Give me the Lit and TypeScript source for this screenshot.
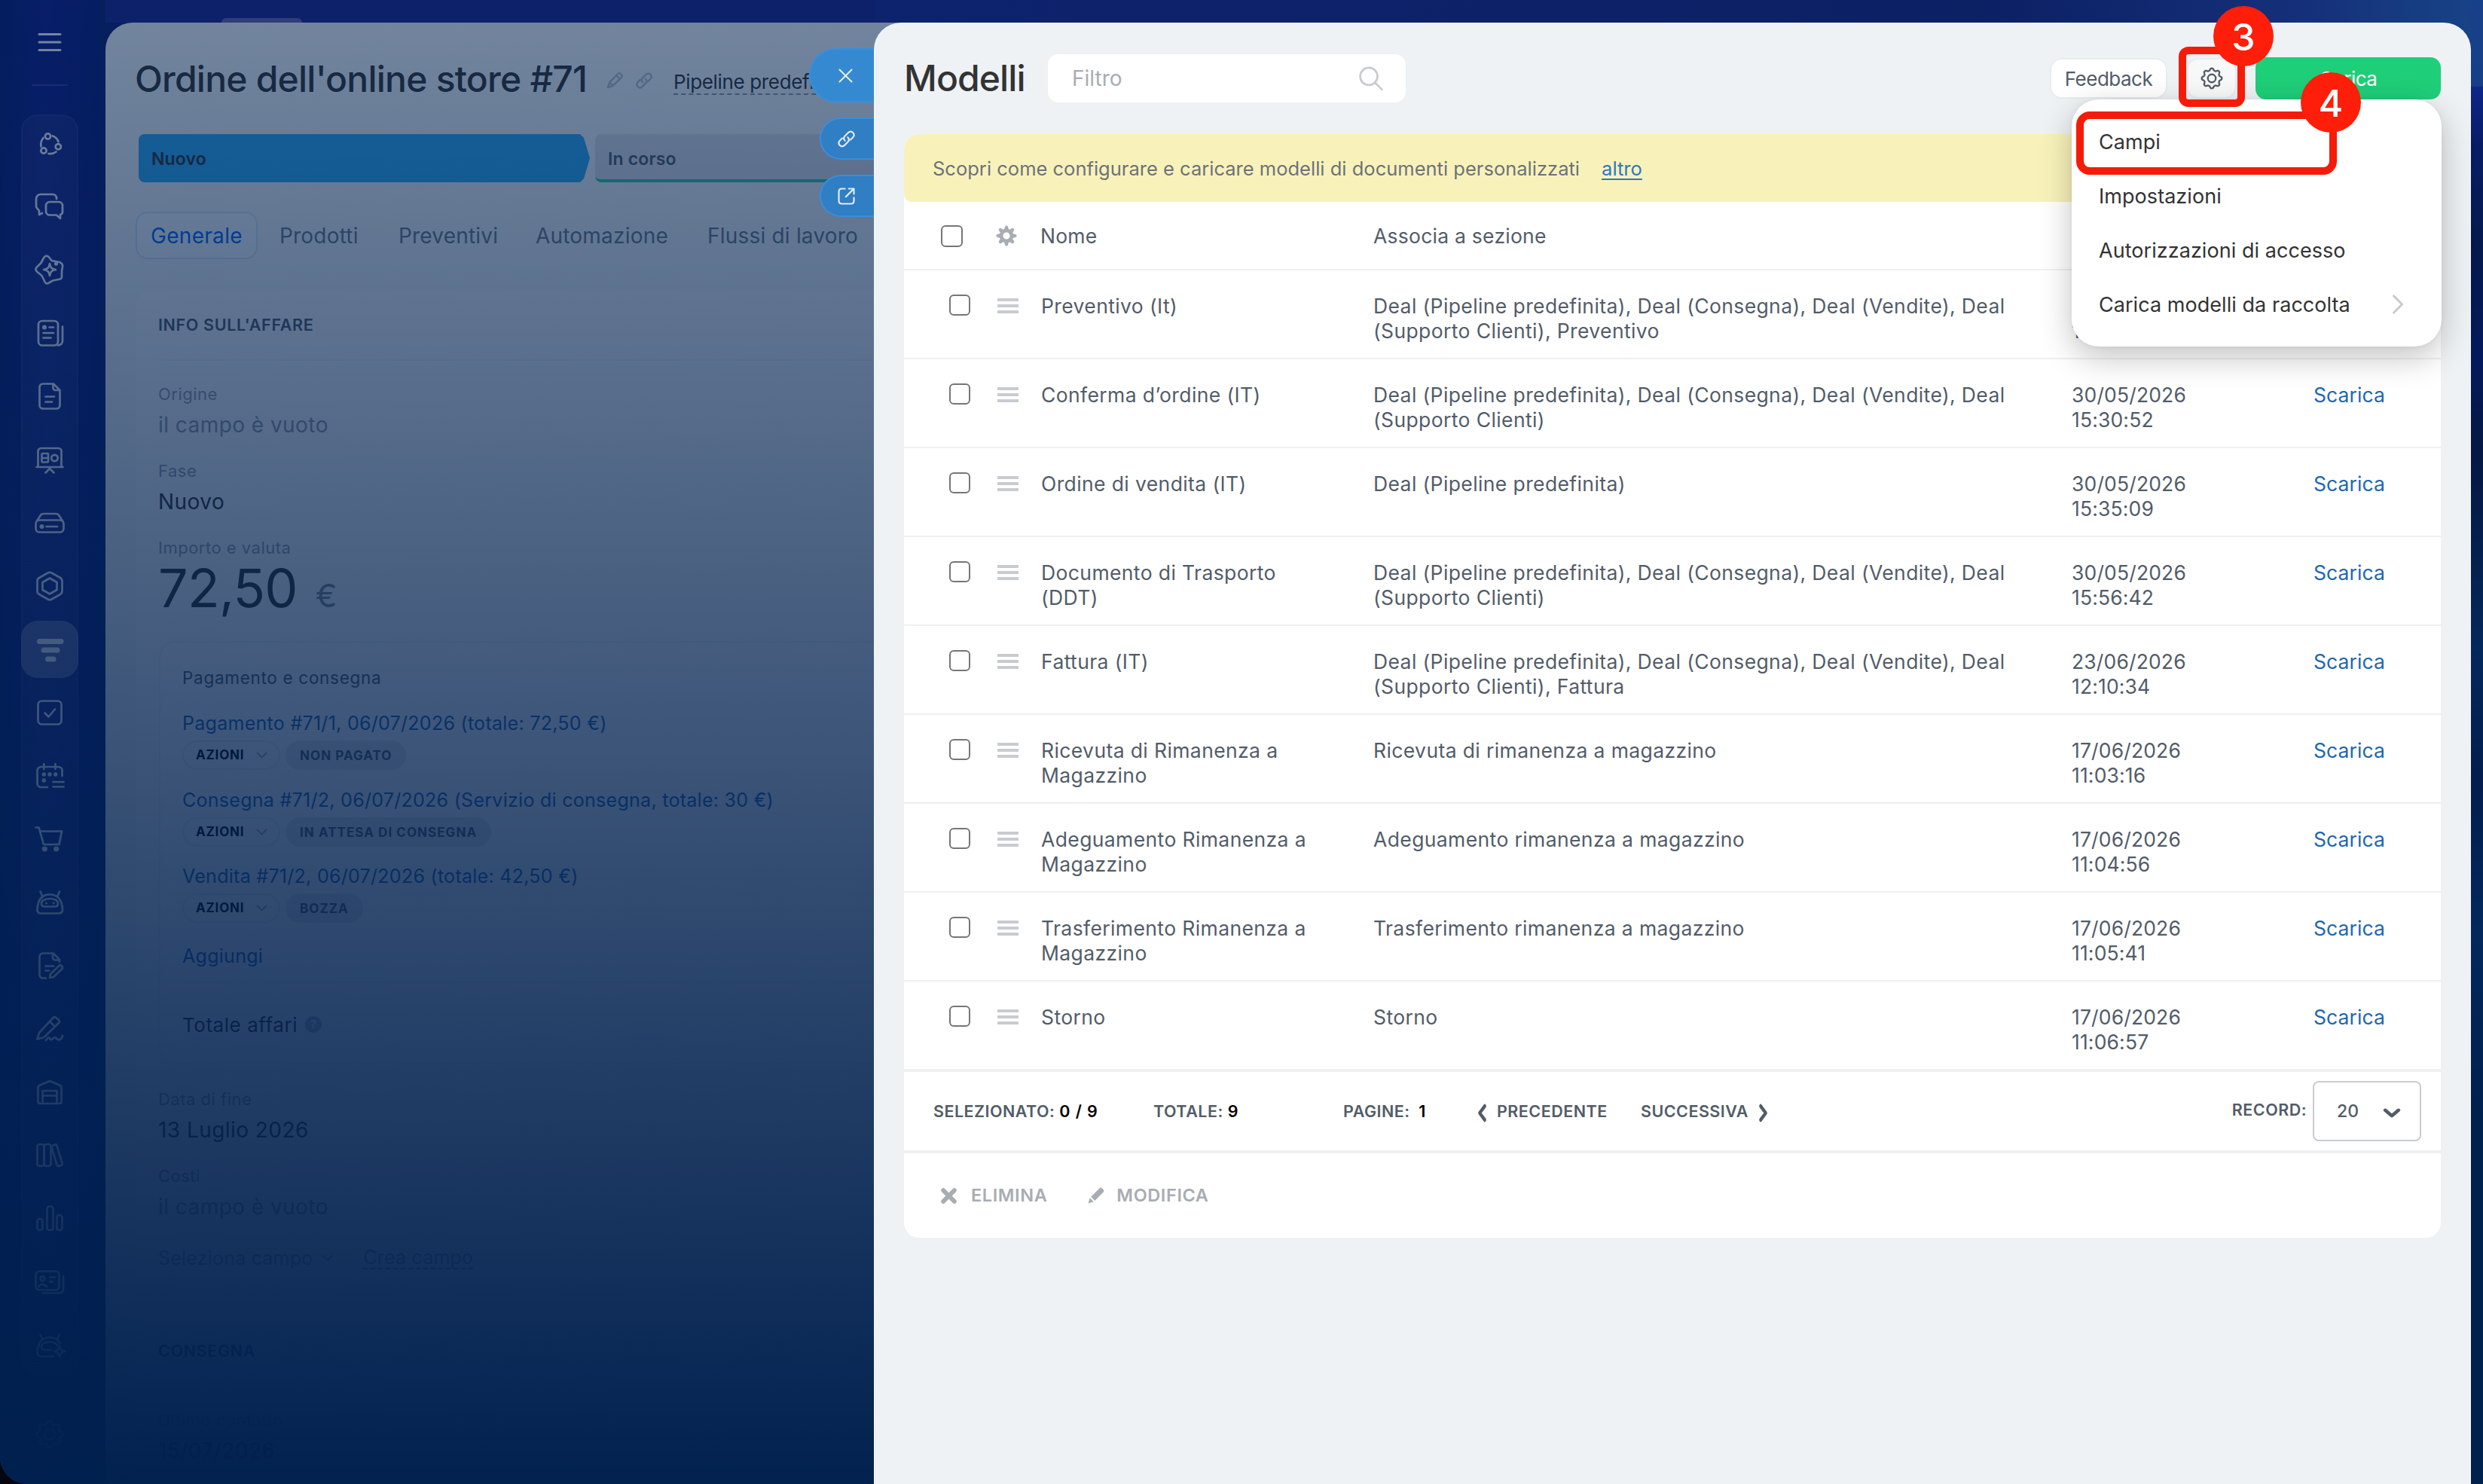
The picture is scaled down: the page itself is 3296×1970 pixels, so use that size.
import { LitElement, html, svg, css, nothing } from "lit";
import { customElement, property } from "lit/decorators.js";
import { classMap } from "lit/directives/class-map.js";

/** Closed outline of a gear with soft teeth, as a path string. */
function gearPath(cx: number, cy: number, r: number, depth: number, teeth: number): string {
  const steps = teeth * 16;
  let d = "";
  for (let i = 0; i <= steps; i++) {
    const a = (i / steps) * Math.PI * 2;
    const wave = Math.max(-0.75, Math.min(0.75, Math.cos(a * teeth))) / 0.75;
    const rr = r + depth * wave;
    d += `${i ? "L" : "M"}${(cx + rr * Math.sin(a)).toFixed(2)} ${(cy - rr * Math.cos(a)).toFixed(2)}`;
  }
  return d + "Z";
}

const ICONS: Record<string, unknown> = {
  menu: svg`<path d="M6 9.5H34M6 20H34M6 30.5H34"/>`,
  share: svg`<circle cx="17.5" cy="11" r="3.6"/><circle cx="31.3" cy="24.7" r="3.6"/><circle cx="12" cy="30" r="3.6"/>
    <path d="M24 10.5A13 13 0 0 1 31.500 18M28.500 31.500A13 13 0 0 1 18.500 34M8.500 24.500A14 14 0 0 1 11.500 13"/>`,
  chat: svg`<path d="M29 10V9a5 5 0 0 0-5-5H8a6 6 0 0 0-6 6V20c0 3 3 3 4 6v5l4-2"/>
    <path d="M20 14H32a5 5 0 0 1 5 5V27a4 4 0 0 1-3 4V36l-5-4.500H20a5 5 0 0 1-5-5V19a5 5 0 0 1 5-5z"/>`,
  star: svg`<path d="M12 4.500Q15.500-1 19.500 4L22.500 8L33 10Q37.500 11.500 37 16L36 22V30Q35.500 33 31 33L24 34.500L18 38Q14 39.500 12.500 34L9.500 28L3 22.500Q0 19.500 3 16.500L8.500 11z"/>
    <path d="M20 12c1 5.500 2.500 7 8 8c-5.500 1-7 2.500-8 8c-1-5.500-2.500-7-8-8c5.500-1 7-2.500 8-8z"/><circle class="dot" cx="28.500" cy="12" r="2.600"/>`,
  news: svg`<rect x="5" y="4" width="26" height="32.500" rx="5"/><path d="M37 11.500V30.500a6 6 0 0 1-6 6M19.500 12.500H25M11.500 20H25M11.500 26.500H21.500"/><circle class="dot" cx="13" cy="12.500" r="3"/>`,
  doc: svg`<path d="M11 3.500H25L33.500 12V32a4.500 4.500 0 0 1-4.500 4.500H11a4.500 4.500 0 0 1-4.500-4.500V8a4.500 4.500 0 0 1 4.500-4.500zM24.500 4V9a3 3 0 0 0 3 3H33M14.500 20.500H26M14.500 27.500H23"/>`,
  board: svg`<path d="M4.500 29V9a4 4 0 0 1 4-4h23a4 4 0 0 1 4 4V29M2.500 30H37.500M14.500 37.500L20 32L25.500 37.500"/><rect x="9.500" y="12" width="8.500" height="11.500" rx="1"/><path d="M10 18H18"/><circle cx="26.500" cy="18" r="4.200"/>`,
  drive: svg`<rect x="1.500" y="16.500" width="37" height="16" rx="5"/><path d="M3 17.500L7.500 10.500a5 5 0 0 1 4.500-2.500H28a5 5 0 0 1 4.500 2.500L37 17.500M15.500 25H30"/><circle class="dot" cx="9.500" cy="25" r="3"/>`,
  hex: svg`<path d="M17.500 2.500q2.500-1.500 5 0L34 9q2.500 1.500 2.500 4.500v13q0 3-2.500 4.500L22.500 37.500q-2.500 1.500-5 0L6 31q-2.500-1.500-2.500-4.500v-13q0-3 2.500-4.500z"/><path d="M20 9.500L29.500 15V25L20 30.500L10.500 25V15z"/>`,
  crm: svg`<path class="bar" d="M6.500 9.500H35M12 21H30M17.500 33H25"/>`,
  check: svg`<rect x="4.500" y="4.500" width="31" height="31" rx="5"/><path d="M13.500 20.500l5 5 8.500-10"/>`,
  calendar: svg`<path d="M17 35H8.500a5 5 0 0 1-5-5V13a5 5 0 0 1 5-5H31.500a5 5 0 0 1 5 5V20M12.300 4V11M27.500 4V11M24.500 28H38.500M24.500 34.500H38.500"/><circle class="dot" cx="12.300" cy="18" r="2.700"/><circle class="dot" cx="20" cy="18" r="2.700"/><circle class="dot" cx="27.700" cy="18" r="2.700"/><circle class="dot" cx="12.300" cy="26" r="2.700"/>`,
  cart: svg`<path d="M1.500 4.500H5.500L12 27H32.500L36 9.500H7.500"/><circle class="dot" cx="13.300" cy="33" r="3.600"/><circle class="dot" cx="28.700" cy="33" r="3.600"/>`,
  robot: svg`<path d="M3.500 29.500C4 16 10 9.500 20 9.500S36.500 16 37 29.500q0 5-5 5H8.500q-5 0-5-5zM10 11L7.500 5.500M30.500 11L33 5.500"/><path d="M9 21c0-8 22-8 22 0q0 4.500-4 4.500H13q-4 0-4-4.500z"/><circle class="dot" cx="15.500" cy="21" r="1.500"/><circle class="dot" cx="25" cy="21" r="1.500"/>`,
  docedit: svg`<path d="M15 36.500H11a4.500 4.500 0 0 1-4.500-4.500V8a4.500 4.500 0 0 1 4.500-4.500H25L33 12V15M24 4V9a3.500 3.500 0 0 0 3.500 3.500H33M14.500 20.500H25M14.500 26.500H19"/><path d="M20 36l1-5L32 20.500q2-2 4 0t0 4L25 35z"/>`,
  sign: svg`<path d="M3.500 33.500L6 25L24.500 5q2-2 4 0l3.500 3q2 2 0 4L12.500 31zM20 10l7 7M15 35q4-6 5-2.500t5-.5q3-2 4 1q6 3.500 8-4"/>`,
  store: svg`<path d="M7.500 35Q4.500 35 4.500 32V14Q4.500 11.500 7 10.500L20 5L33 10.500Q35.500 11.500 35.500 14V32Q35.500 35 32.500 35zM10.500 34.500V18H29.500V34.500M10.500 24.500H29.500"/>`,
  books: svg`<rect x="3.500" y="5" width="9" height="29" rx="3"/><rect x="12.500" y="5" width="9" height="29" rx="3"/><path d="M24 6.500L27 5.500Q29 5 29.500 6.500L36.500 30.500Q37 32.500 35 33L32 34Q30.500 34.500 29.500 32.500L22.500 9Q22 7 24 6.500z"/>`,
  chart: svg`<rect x="3.500" y="20" width="7" height="15" rx="3"/><rect x="16.500" y="3.500" width="8" height="31.500" rx="3"/><rect x="29.500" y="15" width="7" height="20" rx="3"/>`,
  cards: svg`<rect x="1.500" y="5.500" width="31" height="25" rx="5"/><path d="M38 12V29.500a5 5 0 0 1-5 5H10M20 13.500H27M20 19.500H24M5.500 26q4.500-6 10.500 0"/><circle cx="10.500" cy="15.500" r="2.800"/>`,
  robotspark: svg`<path d="M25 34.500H8.500q-5 0-5-5C4 16 10 9.500 20 9.500q10 0 13.500 8M10 11L7.500 5.500M30.500 11L33 5.500M22 26H13q-4 0-4-4.500c0-8 20-8 21-1"/><path d="M33 21q1 6 7 7q-6 1-7 7q-1-6-7-7q6-1 7-7z"/>`,
  gear: svg`<path d=${gearPath(20, 20, 15.500, 1.800, 8)}/><circle cx="20" cy="20" r="7"/>`,
  gearSmall: svg`<path d=${gearPath(20, 20, 17, 1.900, 8)}/><circle cx="20" cy="20" r="7.500"/>`,
  gearSolid: svg`<path class="solid" fill-rule="evenodd" d=${gearPath(20, 20, 16.300, 3, 8) + "M20 13.500a6.500 6.500 0 1 0 0 13a6.500 6.500 0 1 0 0-13z"}/>`,
  pencil: svg`<path d="M5 35L8.500 24L27 5q3-3 6 0l2 2q3 3 0 6L16 31.500zM24 9l7.500 7.500M8.500 24l7.500 7.500"/>`,
  link: svg`<path d="M17 23.500q-5-5 0-10L24 6.500q5-4.500 10 0q4.500 5 0 10L29 21.500M23 16.500q5 5 0 10L16 33.500q-5 4.500-10 0q-4.500-5 0-10L11 18.500"/>`,
  open: svg`<path d="M17 4H10.500Q4 4 4 10.500V29.500Q4 36 10.500 36H29.500Q36 36 36 29.500V23M25 4H36V15M35.500 4.500L19 21"/>`,
  close: svg`<path d="M6 6L34 34M34 6L6 34"/>`,
  search: svg`<circle cx="16.500" cy="17" r="13.500"/><path d="M26.500 27L37 37.500"/>`,
  right: svg`<path d="M12 4L28 20L12 36"/>`,
  left: svg`<path d="M28 4L12 20L28 36"/>`,
  down: svg`<path d="M4 12L20 28L36 12"/>`,
  cross: svg`<path d="M6 6L34 34M34 6L6 34"/>`,
  pencilSolid: svg`<path class="solid" d="M1 39L5 26L14 35zM7.500 23L28 2.500q3-3 6 0l3.500 3.500q3 3 0 6L17 32.500z"/>`,
};

const NAV = ["share", "chat", "star", "news", "doc", "board", "drive", "hex", "crm", "check", "calendar", "cart",
  "robot", "docedit", "sign", "store", "books", "chart", "cards", "robotspark"];

const ALL_DEALS = "Deal (Pipeline predefinita), Deal (Consegna), Deal (Vendite), Deal";

interface Row { name: string[]; bind: string[]; date: string; time: string; action: string; }
const ROWS: Row[] = [
  { name: ["Preventivo (It)"], bind: [ALL_DEALS, "(Supporto Clienti), Preventivo"], date: "\u00a0", time: "15:28:14", action: "" },
  { name: ["Conferma d’ordine (IT)"], bind: [ALL_DEALS, "(Supporto Clienti)"], date: "30/05/2026", time: "15:30:52", action: "Scarica" },
  { name: ["Ordine di vendita (IT)"], bind: ["Deal (Pipeline predefinita)"], date: "30/05/2026", time: "15:35:09", action: "Scarica" },
  { name: ["Documento di Trasporto", "(DDT)"], bind: [ALL_DEALS, "(Supporto Clienti)"], date: "30/05/2026", time: "15:56:42", action: "Scarica" },
  { name: ["Fattura (IT)"], bind: [ALL_DEALS, "(Supporto Clienti), Fattura"], date: "23/06/2026", time: "12:10:34", action: "Scarica" },
  { name: ["Ricevuta di Rimanenza a", "Magazzino"], bind: ["Ricevuta di rimanenza a magazzino"], date: "17/06/2026", time: "11:03:16", action: "Scarica" },
  { name: ["Adeguamento Rimanenza a", "Magazzino"], bind: ["Adeguamento rimanenza a magazzino"], date: "17/06/2026", time: "11:04:56", action: "Scarica" },
  { name: ["Trasferimento Rimanenza a", "Magazzino"], bind: ["Trasferimento rimanenza a magazzino"], date: "17/06/2026", time: "11:05:41", action: "Scarica" },
  { name: ["Storno"], bind: ["Storno"], date: "17/06/2026", time: "11:06:57", action: "Scarica" },
];

@customElement("ui-icon")
class UiIcon extends LitElement {
  @property() name = "";
  static styles = css`
    :host { display: block; width: 40px; height: 40px; flex: none; --w: 2.7; }
    svg { display: block; width: 100%; height: 100%; overflow: visible; fill: none; stroke: currentColor;
      stroke-width: var(--w); stroke-linecap: round; stroke-linejoin: round; }
    .dot, .solid { fill: currentColor; stroke: none; }
    .bar { stroke-width: 7; }
  `;
  render() {
    return html`<svg viewBox="0 0 40 40" preserveAspectRatio="none">${ICONS[this.name] ?? nothing}</svg>`;
  }
}

@customElement("nav-rail")
class NavRail extends LitElement {
  static styles = css`
    :host { display: flex; flex-direction: column; align-items: center; width: 132px; height: 1970px; color: #f1f4fb;
      background: linear-gradient(90deg, rgb(8, 26, 112), rgb(14, 28, 132) 45%, rgb(10, 26, 118)); }
    .top { margin-top: 36px; --w: 3; }
    .rule { width: 48px; height: 2px; margin: 36px 0 38px; background: rgba(255, 255, 255, 0.15); }
    .list { display: flex; flex-direction: column; gap: 8px; width: 72px; padding: 0; border-radius: 22px;
      background: rgba(255, 255, 255, 0.06); border: 2px solid rgba(255, 255, 255, 0.05); }
    .item { display: flex; align-items: center; justify-content: center; height: 76px; margin: 0 -2px; }
    .item.first { margin-top: -2px; }
    .item.on { border-radius: 22px; background: rgba(255, 255, 255, 0.3); }
    .gear { margin-top: 58px; opacity: 0.7; }
  `;
  render() {
    return html`
      <ui-icon class="top" name="menu"></ui-icon>
      <div class="rule"></div>
      <div class="list">
        ${NAV.map((n, i) => html`<div class=${classMap({ item: true, first: i === 0, on: n === "crm" })}><ui-icon name=${n}></ui-icon></div>`)}
      </div>
      <ui-icon class="gear" name="gear"></ui-icon>
    `;
  }
}

@customElement("order-panel")
class OrderPanel extends LitElement {
  static styles = css`
    :host { display: block; height: 1940px; overflow: hidden; background: #eef2f4; border-radius: 36px 0 0 0; color: #333; }
    .head { display: flex; align-items: center; height: 60px; padding: 45px 0 0 39px; white-space: nowrap; }
    h1 { margin: 0; font-size: 48px; font-weight: 500; width: 625px; letter-spacing: -0.77px; line-height: 60px; }
    .head ui-icon { width: 24px; height: 24px; color: #b4bbc5; --w: 4; margin: 4px 15px 0 0; }
    .pipe { font-size: 26px; line-height: 31px; letter-spacing: -0.35px; border-bottom: 2px dashed #8b95a3; margin: 8px 0 0 12px; }
    .stages { display: flex; gap: 7px; height: 64px; margin: 43px 0 0 44px; font-size: 23px; font-weight: 600; line-height: 67px; letter-spacing: 0.15px; }
    .new { width: 582px; padding-left: 17px; background: #2fa8ee; border-radius: 8px; box-sizing: content-box;
      clip-path: polygon(0 0, 586px 0, 591px 5px, 599px 32px, 591px 59px, 586px 64px, 0 64px); }
    .next { flex: 1; padding-left: 17px; box-sizing: border-box; border-radius: 8px; background: #d8dce2; color: #525c69; border-bottom: 4px solid #2fc6a5; }
    .tabs { display: grid; grid-template-columns: 191px 158px 182px 228px 1fr; margin: 39px 0 0 40px; font-size: 28px; line-height: 65px; color: #6b7788; white-space: nowrap; letter-spacing: 0.2px; }
    .tabs .on { box-sizing: border-box; width: 162px; height: 63px; padding-left: 18px; border: 2px solid #cbe1f5; border-radius: 16px; color: #0064f0; line-height: 61px; background: #f1f6fa; letter-spacing: 0.3px; }
    .card { margin: 40px 0 0 40px; height: 1341px; padding-left: 30px; border-radius: 20px 0 0 20px; background: #f4f6f8; }
    .card.second { margin-top: 21px; height: 300px; }
    .title { height: 91px; line-height: 91px; font-size: 21.500px; font-weight: 600; color: #525c69; border-bottom: 2px solid #ebeef0; margin-bottom: 24px; letter-spacing: 0.65px; }
    .label { height: 40px; line-height: 41px; font-size: 22px; color: #959ca4; letter-spacing: 0.5px; }
    .value { height: 41px; line-height: 43px; font-size: 28px; margin-bottom: 21px; letter-spacing: 0.450px; }
    .empty { color: #8f98a2; }
    .sum { display: flex; box-sizing: border-box; height: 71px; align-items: center; font-size: 70px; letter-spacing: -0.7px; line-height: 66px; padding-bottom: 3px; }
    .sum span { font-size: 43px; margin: 17px 0 0 24px; color: #828b95; }
    .inner { box-sizing: border-box; height: 562px; margin: 33px 0 26px 1px; padding: 26px 0 0 29px; border: 2px solid #ebeef0; border-right: 0; border-radius: 22px 0 0 22px; background: #f6f8fa; }
    .cap { height: 40px; line-height: 42px; font-size: 22.500px; color: #525c69; letter-spacing: 0.700px; margin-bottom: 19px; }
    .doc { height: 101.500px; }
    .lnk { line-height: 44px; font-size: 25px; color: #1f67b6; white-space: nowrap; letter-spacing: 0.280px; }
    .pills { display: flex; gap: 7px; font-size: 17px; font-weight: 700; line-height: 40px; letter-spacing: 0.8px; margin-top: 1px; }
    .act { display: flex; align-items: center; box-sizing: border-box; width: 130px; height: 39px; padding-left: 16px; border: 2px solid #e6eaed; border-radius: 20px; color: #000; line-height: 35px; }
    .act ui-icon { width: 15px; height: 15px; margin-left: 16px; color: #a8adb4; --w: 5; }
    .state { height: 39px; padding: 0 19px; border-radius: 20px; background: #dfe3e8; color: #525c69; letter-spacing: 1.050px; }
    .add { height: 60px; line-height: 52px; border-bottom: 2px solid #ebeef0; }
    .total { display: flex; align-items: center; gap: 10px; height: 111px; font-size: 26px; letter-spacing: 0.550px; }
    .q { width: 22px; height: 22px; border-radius: 50%; background: #b8bdc4; color: #f8fafb; font-size: 15px; font-weight: 700; line-height: 22px; text-align: center; letter-spacing: 0; }
    .more { display: flex; align-items: center; margin-top: 28px; height: 40px; font-size: 25px; color: #959ca4; letter-spacing: 0.2px; line-height: 28px; }
    .more ui-icon { width: 16px; height: 16px; margin: 0 39px 0 12px; --w: 4; }
    .more u { text-decoration: none; border-bottom: 2px dashed #959ca4; }
  `;
  doc(link: string, state: string) {
    return html`<div class="doc"><div class="lnk">${link}</div>
      <div class="pills"><div class="act">AZIONI<ui-icon name="down"></ui-icon></div><div class="state">${state}</div></div></div>`;
  }
  render() {
    return html`
      <div class="head"><h1>Ordine dell'online store #71</h1><ui-icon name="pencil"></ui-icon><ui-icon name="link"></ui-icon><span class="pipe">Pipeline predefinita</span></div>
      <div class="stages"><div class="new">Nuovo</div><div class="next">In corso</div></div>
      <div class="tabs"><span class="on">Generale</span><span>Prodotti</span><span>Preventivi</span><span>Automazione</span><span>Flussi di lavoro</span></div>
      <div class="card">
        <div class="title">INFO SULL'AFFARE</div>
        <div class="label">Origine</div><div class="value empty">il campo è vuoto</div>
        <div class="label">Fase</div><div class="value">Nuovo</div>
        <div class="label">Importo e valuta</div><div class="sum">72,50<span>€</span></div>
        <div class="inner">
          <div class="cap">Pagamento e consegna</div>
          ${this.doc("Pagamento #71/1, 06/07/2026 (totale: 72,50 €)", "NON PAGATO")}
          ${this.doc("Consegna #71/2, 06/07/2026 (Servizio di consegna, totale: 30 €)", "IN ATTESA DI CONSEGNA")}
          ${this.doc("Vendita #71/2, 06/07/2026 (totale: 42,50 €)", "BOZZA")}
          <div class="lnk add">Aggiungi</div>
          <div class="total">Totale affari<span class="q">?</span></div>
        </div>
        <div class="label">Data di fine</div><div class="value">13 Luglio 2026</div>
        <div class="label">Costi</div><div class="value empty">il campo è vuoto</div>
        <div class="more">Seleziona campo<ui-icon name="down"></ui-icon><u>Crea campo</u></div>
      </div>
      <div class="card second">
        <div class="title">CONSEGNA</div>
        <div class="label">Ultimo contatto</div><div class="value">15/07/2026</div>
      </div>
    `;
  }
}

@customElement("templates-panel")
class TemplatesPanel extends LitElement {
  static styles = css`
    :host { display: block; height: 1940px; padding: 0 40px; box-sizing: border-box; background: #eef2f5; border-radius: 36px 36px 0 0; color: #525c69; }
    .head { display: flex; align-items: center; height: 64px; padding-top: 42px; }
    h1 { margin: 0; width: 191px; font-size: 48px; font-weight: 500; line-height: 60px; color: #333; letter-spacing: -0.9px; white-space: nowrap; }
    .filter { display: flex; align-items: center; justify-content: space-between; box-sizing: border-box; width: 475px; height: 64px; padding: 0 29px 0 32px; border-radius: 14px; background: #fff; font-size: 28px; color: #a8adb4; letter-spacing: 0; }
    .filter ui-icon { width: 34px; height: 34px; color: #c8cbd0; --w: 3.200; }
    .btn { display: flex; align-items: center; justify-content: center; height: 50px; border-radius: 14px; background: #fff; font-size: 26px; letter-spacing: -0.5px; box-shadow: 0 0 0 2px rgba(82, 92, 105, 0.04); }
    .feedback { width: 152px; margin-left: auto; }
    .cog { width: 63px; margin-left: 29px; background: #f7f8f8; }
    .cog ui-icon { width: 28px; height: 28px; --w: 3.300; }
    .upload { width: 246px; height: 56px; margin-left: 27px; background: #1fce79; color: #fff; box-shadow: none; }
    .box { margin-top: 42px; background: #fff; border-radius: 20px; overflow: hidden; }
    .note { height: 90px; box-sizing: border-box; padding-left: 38px; border-radius: 20px 20px 10px 10px; background: #f8f2ba; font-size: 25.500px; line-height: 92px; color: #6d7279; letter-spacing: 0.010px; }
    .note u { margin-left: 29px; color: #2c78c0; text-decoration-thickness: 2px; text-underline-offset: 4px; }
    .row { display: grid; grid-template-columns: 124px 58px 441px 927px 321px 1fr; box-sizing: border-box; height: 118px; padding-top: 31px; border-bottom: 2px solid #eef0f2; font-size: 26.500px; line-height: 33px; white-space: nowrap; letter-spacing: 0.390px; }
    .row.header { height: 91px; padding-top: 29px; letter-spacing: 0.250px; }
    .row.header span:first-of-type { margin-left: -1px; }
    .row.last { height: 120px; border-bottom-width: 4px; }
    .cb { box-sizing: border-box; width: 28px; height: 28px; margin: 1px 0 0 60px; border: 2px solid #767676; border-radius: 6px; background: #fff; }
    .header .cb { margin: 2px 0 0 49px; width: 29px; height: 29px; }
    .header ui-icon { width: 28px; height: 28px; margin: 2px 0 0 -2px; color: #a8adb4; }
    .grip { width: 28px; height: 4px; margin-top: 6px; background: #c8ccd1; box-shadow: 0 8px #c8ccd1, 0 16px #c8ccd1; }
    .when { letter-spacing: 0.150px; }
    .dl { color: #2067b0; letter-spacing: 0.100px; }
    .pager { display: grid; grid-template-columns: 292px 252px 176px 219px 1fr auto 144px; align-items: center; height: 104px; padding: 0 26px 0 39px; border-bottom: 4px solid #eef0f2; font-size: 21.500px; font-weight: 600; letter-spacing: 0.480px; white-space: nowrap; }
    .pager b { font-weight: 600; color: #000; letter-spacing: 0.900px; }
    .step { display: flex; align-items: center; gap: 11px; }
    .step ui-icon { width: 17px; height: 23px; --w: 9; margin-top: 4px; }
    .select { display: flex; align-items: center; box-sizing: border-box; height: 80px; padding: 0 26px 0 30px; justify-content: space-between; border: 2px solid #c8ccd3; border-radius: 8px; font-size: 23px; letter-spacing: 0; font-weight: 500; }
    .select ui-icon { width: 22px; height: 19px; --w: 9; margin-top: 5px; }
    .rec { margin: -5px 8px 0 0; }
    .bulk { display: flex; align-items: center; height: 112px; padding-left: 49px; font-size: 23.500px; font-weight: 600; color: #a8adb3; letter-spacing: 0.600px; line-height: 30px; }
    .bulk ui-icon { width: 21px; height: 21px; margin-right: 19px; --w: 11; }
    .bulk .edit { margin-left: 54px; margin-right: 16px; width: 22px; height: 22px; }
  `;
  render() {
    return html`
      <div class="head">
        <h1>Modelli</h1>
        <div class="filter">Filtro<ui-icon name="search"></ui-icon></div>
        <div class="btn feedback">Feedback</div>
        <div class="btn cog"><ui-icon name="gearSmall"></ui-icon></div>
        <div class="btn upload">Carica</div>
      </div>
      <div class="box">
        <div class="note">Scopri come configurare e caricare modelli di documenti personalizzati<u>altro</u></div>
        <div class="row header"><div class="cb"></div><ui-icon name="gearSolid"></ui-icon><span>Nome</span><span>Associa a sezione</span></div>
        ${ROWS.map((r, i) => html`
          <div class=${classMap({ row: true, last: i === ROWS.length - 1 })}>
            <div class="cb"></div><div class="grip"></div>
            <div>${r.name.map((l) => html`<div>${l}</div>`)}</div>
            <div>${r.bind.map((l) => html`<div>${l}</div>`)}</div>
            <div class="when"><div>${r.date}</div><div>${r.time}</div></div>
            <div class="dl">${r.action}</div>
          </div>`)}
        <div class="pager">
          <span>SELEZIONATO: <b>0 / 9</b></span><span>TOTALE: <b>9</b></span><span>PAGINE: &nbsp;<b>1</b></span>
          <span class="step"><ui-icon name="left"></ui-icon>PRECEDENTE</span>
          <span class="step">SUCCESSIVA<ui-icon name="right"></ui-icon></span>
          <span class="rec">RECORD:</span>
          <div class="select">20<ui-icon name="down"></ui-icon></div>
        </div>
        <div class="bulk"><ui-icon name="cross"></ui-icon>ELIMINA<ui-icon class="edit" name="pencilSolid"></ui-icon>MODIFICA</div>
      </div>
    `;
  }
}

@customElement("app-root")
class AppRoot extends LitElement {
  static styles = css`
    :host { display: block; position: relative; width: 3296px; height: 1970px; overflow: hidden; background: #05060f;
      font-family: Inter, "Liberation Sans", sans-serif; -webkit-font-smoothing: antialiased; }
    .shell { display: grid; grid-template-columns: 132px 8px 1020px 2120px 16px; height: 1970px; overflow: hidden; border-radius: 0 0 0 36px;
      background: linear-gradient(90deg, #0a1f6c, #0d236e 30%, #0c2064 80%, #15307a 93%, #174486); }
    .gap { background: linear-gradient(#0e1f6f 0 114px, #00125a 114px 60%, #00204e); z-index: 1; }
    nav-rail { grid-row: 1; grid-column: 1; }
    order-panel { grid-row: 1; grid-column: 3; margin: 30px -60px 0 0; }
    .dim { grid-row: 1; grid-column: 1 / 4; z-index: 2; background: linear-gradient(rgba(0, 32, 78, 0.515), rgba(0, 32, 78, 0.995)); }
    .dimtop { grid-row: 1; grid-column: 4; z-index: 2; height: 70px; margin: 30px 2060px 0 0; background: rgba(0, 32, 78, 0.525); }
    .sky { grid-row: 1; grid-column: 3; z-index: 3; height: 30px; background: #0d216b; }
    .peek { width: 107px; height: 6px; margin: 24px 0 0 154px; border-radius: 10px 10px 0 0; background: #303d78; }
    templates-panel { grid-row: 1; grid-column: 4; margin-top: 30px; z-index: 4; }
    .edge { grid-row: 1; grid-column: 5; background: linear-gradient(#17408a 0, #173f86 114px, #0d2688 116px, #081c66 190px, #05194d 330px, #04195c 480px, #051743 600px, #04285a 860px, #021d4e 1040px, #03285c 1230px, #00204e 1480px, #00204e); }
    .tab { position: absolute; right: 2136px; z-index: 5; display: flex; align-items: center; box-sizing: border-box; color: #fff; border: 2px solid #378fdc; border-right: 0; background: #307ec4; }
    .tab ui-icon { width: 25px; height: 25px; opacity: 0.85; --w: 3.500; }
    .t1 { top: 64px; width: 86px; height: 72px; padding-left: 35px; border-radius: 36px 0 0 36px; background: #3589d1; }
    .t1 ui-icon { width: 23px; height: 23px; }
    .t2 { top: 156px; width: 72px; height: 56px; padding-left: 21px; border-radius: 28px 0 0 28px; }
    .t3 { top: 232px; width: 72px; height: 56px; padding-left: 21px; border-radius: 28px 0 0 28px; }
    .popup { position: absolute; left: 2750px; top: 132px; z-index: 6; width: 491px; height: 328px; box-sizing: border-box; padding: 20px 36px; border-radius: 36px; background: #fff;
      box-shadow: 0 14px 44px rgba(0, 0, 0, 0.24), 0 0 6px rgba(0, 0, 0, 0.05); font-size: 27px; color: #333; letter-spacing: 0.050px; }
    .entry { display: flex; align-items: center; justify-content: space-between; height: 72px; white-space: nowrap; }
    .entry ui-icon { width: 28px; height: 28px; color: #c5c9ce; --w: 4; margin-right: 8px; }
    .frame { position: absolute; z-index: 7; box-sizing: border-box; border: 10px solid #f41c09; }
    .f3 { left: 2892px; top: 62px; width: 88px; height: 80px; border-radius: 13px; }
    .f4 { left: 2756px; top: 148px; width: 346px; height: 84px; border-radius: 18px; }
    .mark { position: absolute; z-index: 8; width: 80px; height: 80px; border-radius: 50%; background: #ff1e09; color: #fff; font-size: 50px; font-weight: 500; line-height: 82px; text-align: center; }
    .m3 { left: 2938px; top: 8px; }
    .m4 { left: 3054px; top: 96px; }
  `;
  render() {
    return html`
      <div class="shell">
        <nav-rail></nav-rail>
        <div class="gap"></div>
        <order-panel></order-panel>
        <div class="dim"></div>
        <div class="dimtop"></div>
        <div class="sky"><div class="peek"></div></div>
        <templates-panel></templates-panel>
        <div class="edge"></div>
      </div>
      <div class="tab t1"><ui-icon name="close"></ui-icon></div>
      <div class="tab t2"><ui-icon name="link"></ui-icon></div>
      <div class="tab t3"><ui-icon name="open"></ui-icon></div>
      <div class="popup">
        <div class="entry">Campi</div>
        <div class="entry">Impostazioni</div>
        <div class="entry">Autorizzazioni di accesso</div>
        <div class="entry">Carica modelli da raccolta<ui-icon name="right"></ui-icon></div>
      </div>
      <div class="frame f3"></div>
      <div class="frame f4"></div>
      <div class="mark m3">3</div>
      <div class="mark m4">4</div>
    `;
  }
}
